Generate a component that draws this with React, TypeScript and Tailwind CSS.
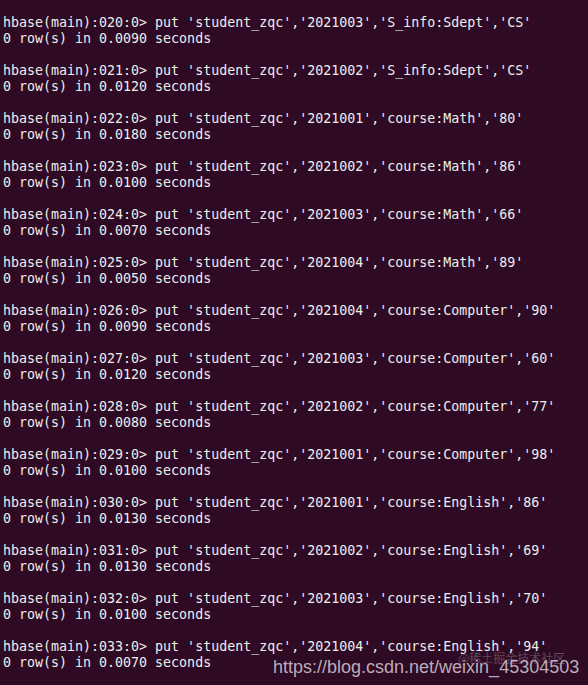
const puts = [
  { n: '020', row: '2021003', col: 'S_info:Sdept', val: 'CS', time: '0.0090' },
  { n: '021', row: '2021002', col: 'S_info:Sdept', val: 'CS', time: '0.0120' },
  { n: '022', row: '2021001', col: 'course:Math', val: '80', time: '0.0180' },
  { n: '023', row: '2021002', col: 'course:Math', val: '86', time: '0.0100' },
  { n: '024', row: '2021003', col: 'course:Math', val: '66', time: '0.0070' },
  { n: '025', row: '2021004', col: 'course:Math', val: '89', time: '0.0050' },
  { n: '026', row: '2021004', col: 'course:Computer', val: '90', time: '0.0090' },
  { n: '027', row: '2021003', col: 'course:Computer', val: '60', time: '0.0120' },
  { n: '028', row: '2021002', col: 'course:Computer', val: '77', time: '0.0080' },
  { n: '029', row: '2021001', col: 'course:Computer', val: '98', time: '0.0100' },
  { n: '030', row: '2021001', col: 'course:English', val: '86', time: '0.0130' },
  { n: '031', row: '2021002', col: 'course:English', val: '69', time: '0.0130' },
  { n: '032', row: '2021003', col: 'course:English', val: '70', time: '0.0100' },
  { n: '033', row: '2021004', col: 'course:English', val: '94', time: '0.0070' },
]

export default function App() {
  return (
    <div className="relative w-[588px] h-[685px] overflow-hidden bg-[#2f0a24] text-[#eeeeec]">
      {/* terminal output */}
      <div className="flex flex-col pl-[3px] pt-[15px] font-['DejaVu_Sans_Mono','Liberation_Mono',monospace] text-[13.3px] leading-4 whitespace-pre">
        {puts.map((p) => (
          <div key={p.n} className="flex flex-col pb-4">
            <div>{`hbase(main):${p.n}:0> put 'student_zqc','${p.row}','${p.col}','${p.val}'`}</div>
            <div>{`0 row(s) in ${p.time} seconds`}</div>
          </div>
        ))}
      </div>

      {/* watermarks */}
      <div className="absolute left-[458px] top-[650px] font-['Noto_Sans_CJK_SC',sans-serif] text-[12px] leading-4 text-white/25">
        @稀土掘金技术社区
      </div>
      <div className="absolute left-[273px] top-[657px] font-['Liberation_Sans',Arial,sans-serif] text-[18px] leading-5 text-[#d6ccd4]/85">
        https://blog.csdn.net/weixin_45304503
      </div>
    </div>
  )
}
